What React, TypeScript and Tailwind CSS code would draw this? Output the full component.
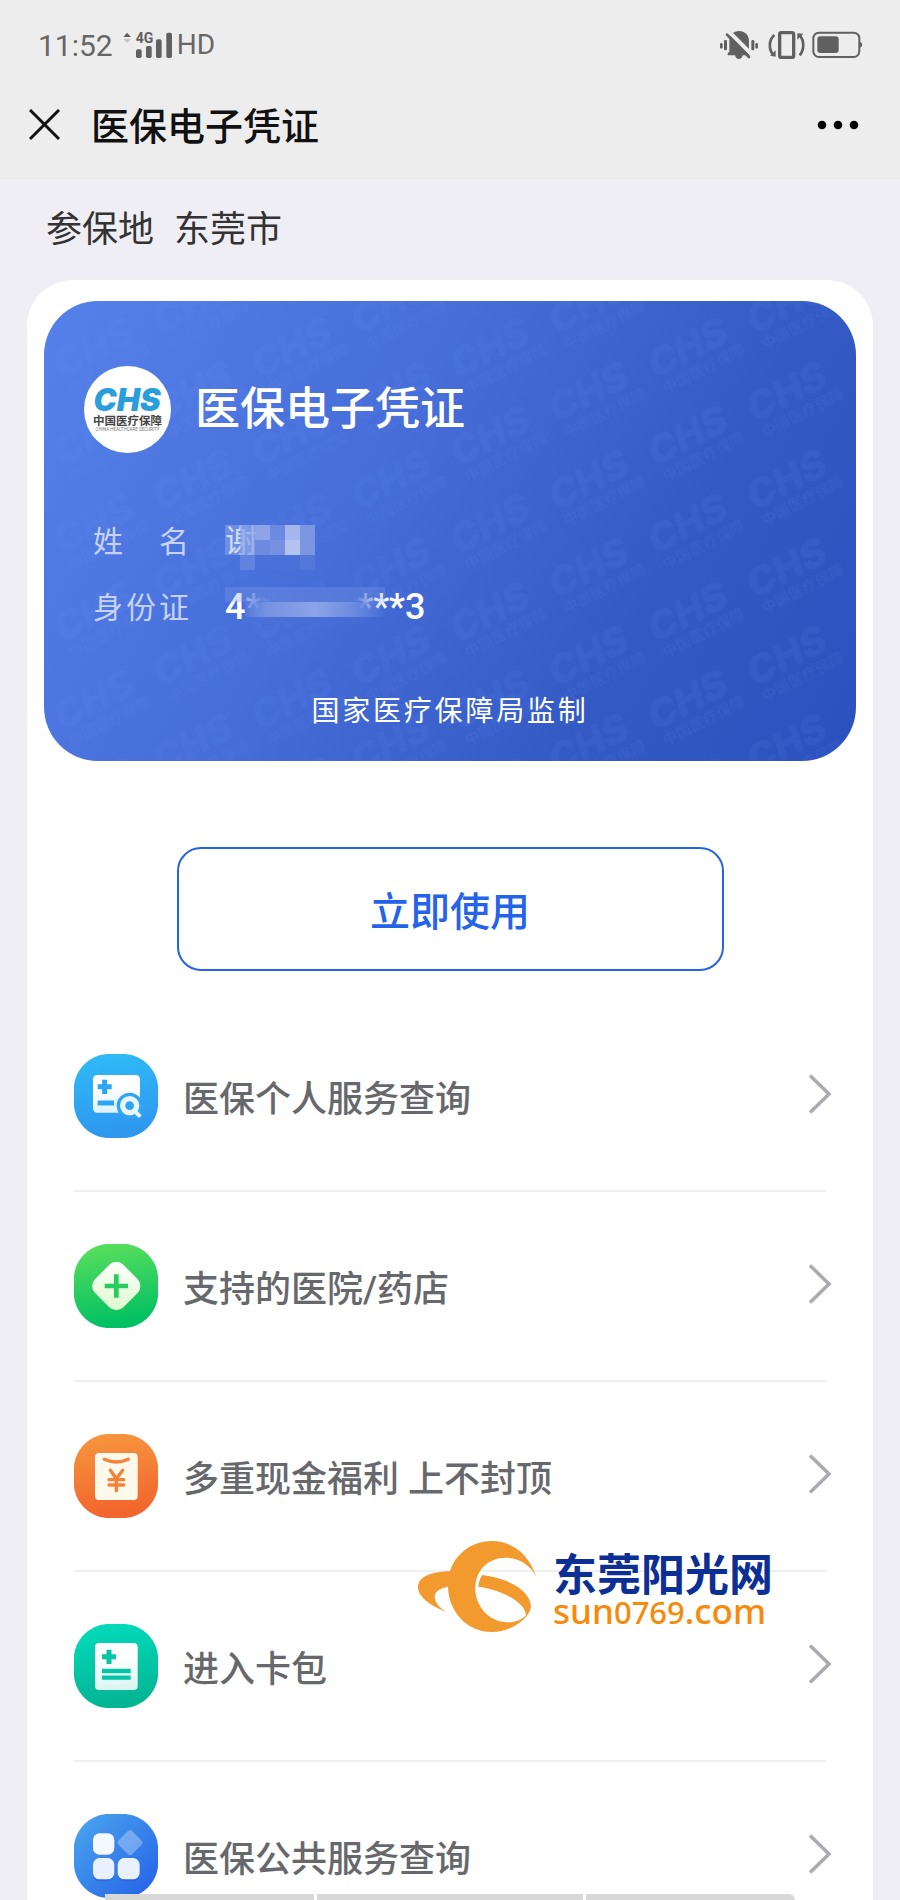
import type { ReactNode } from "react";

type Service = {
    title: string;
    icon: ReactNode;
}

const SERVICES: Service[] = [
    { title: "医保个人服务查询", icon: <PersonalIcon /> },
    { title: "支持的医院/药店", icon: <HospitalIcon /> },
    { title: "多重现金福利 上不封顶", icon: <CashIcon /> },
    { title: "进入卡包", icon: <WalletIcon /> },
    { title: "医保公共服务查询", icon: <PublicIcon /> },
];

export default function App() {
    return (
        <div className="relative h-screen flex flex-col overflow-hidden bg-[#efeef4] font-['Roboto','Noto_Sans_CJK_SC',sans-serif]">
            <header className="shrink-0 bg-[#ededed] border-b border-[#e8e8e8] pb-[18px]">
                <StatusBar />
                <div className="h-[70px] flex items-center pl-[29px] pr-[41px]">
                    <button type="button" aria-label="关闭" className="w-8 h-8">
                        <svg viewBox="0 0 32 32" className="w-8 h-8" fill="none" stroke="#111" strokeWidth="3">
                            <path d="M1 1 30 30M30 1 1 30" />
                        </svg>
                    </button>
                    <h1 className="ml-[30px] pt-1 text-[38px] leading-[56px] font-medium text-[#111]">医保电子凭证</h1>
                    <button type="button" aria-label="更多" className="ml-auto">
                        <svg viewBox="0 0 42 10" className="w-[42px] h-[10px]" fill="#000">
                            <circle cx="5" cy="5" r="4.3" />
                            <circle cx="21" cy="5" r="4.3" />
                            <circle cx="37" cy="5" r="4.3" />
                        </svg>
                    </button>
                </div>
            </header>

            <main className="flex-1 min-h-0 overflow-y-auto [scrollbar-width:none]">
                <div className="h-[101px] flex items-center gap-5 pl-[46px] text-[36px] text-[#333]">
                    <span>参保地</span>
                    <span>东莞市</span>
                </div>
                <section className="relative mx-[27px] px-[17px] pt-[21px] rounded-t-[46px] bg-white">
                    <InsuranceCard />
                    <button type="button" className="block w-[547px] max-w-full h-[124px] mt-[86px] mx-auto pt-2 rounded-[24px] border-2 border-[#2563eb] text-[40px] font-medium text-[#2563eb]">
                        立即使用
                    </button>
                    <nav className="mt-[31px] px-[30px]">
                        {SERVICES.map((item) => (
                            <ServiceRow key={item.title} title={item.title} icon={item.icon} />
                        ))}
                    </nav>
                    <SiteMark />
                </section>
            </main>

            <div className="absolute bottom-0 inset-x-[105px] h-[6px] flex gap-[3px]">
                <div className="w-[209px] bg-[#d8d8d8]" />
                <div className="flex-1 bg-[#d8d8d8]" />
                <div className="w-[209px] rounded-tr-md bg-[#d8d8d8]" />
            </div>
        </div>
    )
}

const StatusBar = () => {
    return (
        <div className="h-[90px] flex items-center pl-[38px] pr-9 text-[#666]">
            <span className="text-[30px]">11:52</span>
            <svg viewBox="368 92 153 87" className="w-[51px] h-[29px] ml-[9px]" fill="#606060">
                <path d="M372 110 383 97 395 110Z" />
                <path d="M372 116 383 128 395 116Z" fill="#c4c4c4" />
                <text x="409" y="128" fontSize="42" fontWeight="700" fontFamily="Roboto">4G</text>
                <rect x="410" y="147" width="17" height="26" rx="5" />
                <rect x="440" y="137" width="17" height="36" rx="5" />
                <rect x="470" y="117" width="17" height="56" rx="5" />
                <rect x="501" y="97" width="17" height="76" rx="5" />
            </svg>
            <span className="ml-1 text-[28px]">HD</span>
            <svg viewBox="357 87 435 96" className="w-[145px] h-8 ml-auto" fill="#606060">
                <rect x="360" y="129" width="8" height="17" rx="4" />
                <rect x="372" y="120" width="9" height="31" rx="4" />
                <rect x="454" y="120" width="9" height="31" rx="4" />
                <rect x="466" y="129" width="8" height="17" rx="4" />
                <path d="M388 155V122C388 105 401 93 417 93C435 93 447 106 447 123V152L453 166H428C426 174 422 177 417 177C411 177 407 174 405 166H383V160Z" />
                <path d="M387 95 455 163" stroke="#ededed" strokeWidth="12" />
                <path d="M381 104 447 171" stroke="#606060" strokeWidth="8" strokeLinecap="round" />
                <g fill="none" stroke="#606060">
                    <rect x="539" y="98" width="42" height="74" rx="5" strokeWidth="10" />
                    <path d="M523 105C506 120 505 148 520 164" strokeWidth="8" />
                    <path d="M599 166C614 148 613 120 598 105" strokeWidth="8" />
                    <rect x="640" y="98" width="138" height="73" rx="17" strokeWidth="6" />
                </g>
                <path d="M527 151V170L510 167Z M592 119V100L610 101Z" />
                <rect x="652" y="109" width="64" height="50" rx="9" />
                <path d="M779 125C789 127 789 141 779 143Z" />
            </svg>
        </div>
    )
}

const InsuranceCard = () => {
    return (
        <div className="relative h-[460px] rounded-[54px] overflow-hidden bg-[linear-gradient(120deg,#5681ea,#466dd8_40%,#345ac6_72%,#2a51bd)] text-white">
            <CardPattern />
            <div className="relative pt-[65px] pl-10">
                <div className="flex items-center">
                    <ChsLogo />
                    <h2 className="ml-6 text-[45px] leading-[60px] font-medium">医保电子凭证</h2>
                </div>
                <dl className="mt-[55px] pl-[9px]">
                    <div className="h-[66px] flex items-center">
                        <dt className="w-[132px] text-[30px] tracking-widest text-[#c6d3f6]">姓　名</dt>
                        <dd className="relative text-[32px] leading-[40px] text-[#c6d3f6]">
                            谢
                            <Mosaic />
                        </dd>
                    </div>
                    <div className="h-[66px] flex items-center">
                        <dt className="w-[132px] text-[30px] tracking-widest text-[#c6d3f6]">身份证</dt>
                        <dd className="relative text-[36px] leading-[40px] font-medium">
                            4**********3
                            <Smudge />
                        </dd>
                    </div>
                </dl>
            </div>
            <p className="relative mt-[51px] text-center text-[28px] leading-[42px] tracking-widest">国家医疗保障局监制</p>
        </div>
    )
}

// pixelated block over the rest of the name
const Mosaic = () => {
    return (
        <svg viewBox="0 0 90 45" className="absolute left-0 top-[4px] w-[90px] h-[45px]" shapeRendering="crispEdges">
            <rect width="15" height="30" fill="#fff" opacity=".2" />
            <rect x="15" width="15" height="30" fill="#8fa8e8" opacity=".75" />
            <rect x="30" width="15" height="15" fill="#8da5e8" />
            <rect x="30" y="15" width="15" height="15" fill="#6c8be0" />
            <rect x="45" width="15" height="15" fill="#6c8be0" />
            <rect x="45" y="15" width="15" height="15" fill="#7691e2" />
            <rect x="60" width="15" height="15" fill="#a3b7ed" />
            <rect x="60" y="15" width="15" height="15" fill="#b3c3f0" />
            <rect x="75" width="15" height="30" fill="#7c97e2" />
            <rect x="15" y="30" width="15" height="15" fill="#6284df" />
            <rect x="30" y="30" width="45" height="15" fill="#4a70d9" />
            <rect x="75" y="30" width="15" height="15" fill="#5378dc" />
        </svg>
    )
}

// smear that hides the middle of the id number
const Smudge = () => {
    return (
        <svg viewBox="0 0 180 36" className="absolute left-0 top-0 w-[180px] h-9">
            <defs>
                <linearGradient id="smear" x1="0" x2="1">
                    <stop offset="0" stopColor="#6f8ee2" stopOpacity=".3" />
                    <stop offset=".15" stopColor="#7592e3" />
                    <stop offset=".5" stopColor="#8ba4e8" />
                    <stop offset=".75" stopColor="#6d8ce0" />
                    <stop offset="1" stopColor="#6d8ce0" stopOpacity="0" />
                </linearGradient>
                <linearGradient id="cover" x1="0" x2="1">
                    <stop offset="0" stopColor="#4b71d9" stopOpacity=".5" />
                    <stop offset=".2" stopColor="#4b71d9" />
                    <stop offset=".85" stopColor="#456bd4" />
                    <stop offset="1" stopColor="#456bd4" stopOpacity=".3" />
                </linearGradient>
            </defs>
            <rect x="20" y="0" width="128" height="36" fill="url(#cover)" />
            <rect x="0" y="0" width="160" height="15" fill="#7f9ae6" opacity=".3" />
            <rect x="20" y="15" width="142" height="15" fill="url(#smear)" />
        </svg>
    )
}

const CardPattern = () => {
    const marks: { x: number, y: number }[] = [];
    for (let col = 0; col < 8; col++) {
        for (let row = 0; row < 6; row++) {
            marks.push({ x: 18 + col * 99, y: (col % 2 === 0 ? 78 : 34) + row * 88 });
        }
    }

    return (
        <svg aria-hidden="true" className="absolute inset-0 w-full h-full" fill="#6f98ff" fillOpacity=".11">
            {marks.map((mark, index) => (
                <g key={index} transform={`translate(${mark.x} ${mark.y}) rotate(-27)`}>
                    <text x="0" y="0" fontSize="39" fontWeight="900" fontStyle="italic" fontFamily="Inter">CHS</text>
                    <text x="2" y="18" fontSize="15" fontWeight="700" fontFamily="Noto Sans CJK SC">中国医疗保障</text>
                </g>
            ))}
        </svg>
    )
}

const ChsLogo = () => {
    return (
        <svg viewBox="0 0 87 87" className="w-[87px] h-[87px]">
            <circle cx="43.5" cy="43.5" r="43.5" fill="#fff" />
            <text x="43" y="45" textAnchor="middle" fontSize="31" fontWeight="900" fontStyle="italic" fontFamily="Inter" fill="#2a9ddb">CHS</text>
            <text x="43.5" y="58.500" textAnchor="middle" fontSize="11.500" fontWeight="700" fontFamily="Noto Sans CJK SC" fill="#444">中国医疗保障</text>
            <text x="43.5" y="65" textAnchor="middle" fontSize="4.500" fontFamily="Roboto" fill="#777">CHINA HEALTHCARE SECURITY</text>
        </svg>
    )
}

const ServiceRow = ({ title, icon }: { title: string, icon: ReactNode }) => {
    return (
        <a href="#" className="h-[190px] flex items-center border-b-2 border-[#efeff0]">
            {icon}
            <span className="ml-[25px] pt-2 text-[36px] leading-[54px] font-medium text-[#66686c]">{title}</span>
            <svg viewBox="0 0 24 40" className="w-6 h-10 ml-auto -mr-1.5 mb-1" fill="none" stroke="#a9aab2" strokeWidth="3.5">
                <path d="M2 1.500 21 20 2 38.500" />
            </svg>
        </a>
    )
}

const IconTile = ({ id, from, to, diagonal, children }: { id: string, from: string, to: string, diagonal?: boolean, children: ReactNode }) => {
    return (
        <svg viewBox="0 0 252 252" className="w-[84px] h-[84px] shrink-0">
            <defs>
                <linearGradient id={id} x1="0" y1="0" x2={diagonal ? "1" : "0.15"} y2="1">
                    <stop offset="0" stopColor={from} />
                    <stop offset="1" stopColor={to} />
                </linearGradient>
                <linearGradient id={id + "-in"} x1="0" y1="0" x2="0" y2="1">
                    <stop offset=".3" stopColor="#fff" />
                    <stop offset="1" stopColor="#fff" stopOpacity=".85" />
                </linearGradient>
            </defs>
            <path
                d="M98 0H154C206 4 248 46 252 96V156C248 206 206 248 154 252H98C46 248 4 206 0 156V96C4 46 46 4 98 0Z"
                fill={`url(#${id})`}
            />
            {children}
        </svg>
    )
}

function PersonalIcon() {
    return (
        <IconTile id="personal" from="#2fbcf8" to="#2e97ef">
            <rect x="57" y="63" width="141" height="113" rx="13" fill="url(#personal-in)" />
            <path d="M71 98H113M92 77V120M71 147H120" stroke="#2aa6f2" strokeWidth="15" />
            <circle cx="167" cy="155" r="39" fill="#2ea6f3" />
            <circle cx="167" cy="155" r="21" fill="none" stroke="#e8f5fe" strokeWidth="16" />
            <path d="M182 171 199 188" stroke="#e8f5fe" strokeWidth="12" />
        </IconTile>
    )
}

function HospitalIcon() {
    return (
        <IconTile id="hospital" from="#5de05c" to="#02c063">
            <defs>
                <linearGradient id="diamond" x1="0" y1="0" x2="1" y2="1">
                    <stop offset="0" stopColor="#fff" />
                    <stop offset="1" stopColor="#dcfacb" />
                </linearGradient>
            </defs>
            <rect x="67" y="66" width="120" height="120" rx="30" transform="rotate(45 127 126)" fill="url(#diamond)" />
            <path d="M92 126H162M127 91V161" stroke="#27cc5e" strokeWidth="14" />
        </IconTile>
    )
}

function CashIcon() {
    return (
        <IconTile id="cash" from="#f7983f" to="#f2652c">
            <rect x="63" y="57" width="128" height="141" rx="12" fill="#fff9ec" />
            <g fill="none" stroke="#f58237" strokeWidth="10" strokeLinecap="round">
                <path d="M91 76Q127 92 163 76" />
                <path d="M109 109 127 134 146 109M127 134V170M105 137H149M105 153H149" />
            </g>
        </IconTile>
    )
}

function WalletIcon() {
    return (
        <IconTile id="wallet" from="#02dcbd" to="#04b594">
            <rect x="63" y="57" width="128" height="141" rx="12" fill="url(#wallet-in)" />
            <path d="M84 98H126M105 77V120" stroke="#04c5a5" strokeWidth="15" />
            <path d="M84 141H170M84 161H170" stroke="#04c5a5" strokeWidth="13" />
        </IconTile>
    )
}

function PublicIcon() {
    return (
        <IconTile id="public" from="#4ba8ee" to="#245fe8" diagonal>
            <g fill="#1b50d8" opacity=".35">
                <rect x="57" y="138" width="64" height="64" rx="20" />
                <rect x="131" y="138" width="66" height="64" rx="20" />
            </g>
            <rect x="139" y="57" width="58" height="58" rx="10" transform="rotate(45 168 86)" fill="#fff" opacity=".3" />
            <g fill="#f4f8ff">
                <rect x="57" y="58" width="64" height="64" rx="20" />
                <rect x="57" y="132" width="64" height="64" rx="20" fill="#e9f1fe" />
                <rect x="131" y="132" width="66" height="64" rx="20" fill="#e9f1fe" />
            </g>
        </IconTile>
    )
}

const SiteMark = () => {
    return (
        <div className="absolute right-[100px] top-[1260px] flex items-center gap-4">
            <svg viewBox="51 60 360 279" className="w-[120px] h-[93px]">
                <path
                    fill="#f39a2e"
                    d="M408 170C390 110 340 63 277 63C215 63 165 103 150 154C110 154 55 165 54 200C53 235 100 260 140 277C115 262 104 245 104 228C106 212 125 203 144 200C146 275 200 336 277 336C330 336 385 300 393 262C394 215 330 175 247 165C240 175 236 187 235 200C300 208 375 245 378 285C365 300 345 307 322 307C270 307 226 262 226 205C226 150 265 113 318 113C360 113 395 140 408 170Z"
                />
            </svg>
            <div className="pt-1">
                <div className="text-[44px] leading-[46px] font-bold text-[#0b2f94]">东莞阳光网</div>
                <div className="font-['Noto_Sans'] text-[35px] leading-[24px] font-medium text-[#f78a0a]">
                    sun<span className="text-[31px]">0769</span>.com
                </div>
            </div>
        </div>
    )
}
